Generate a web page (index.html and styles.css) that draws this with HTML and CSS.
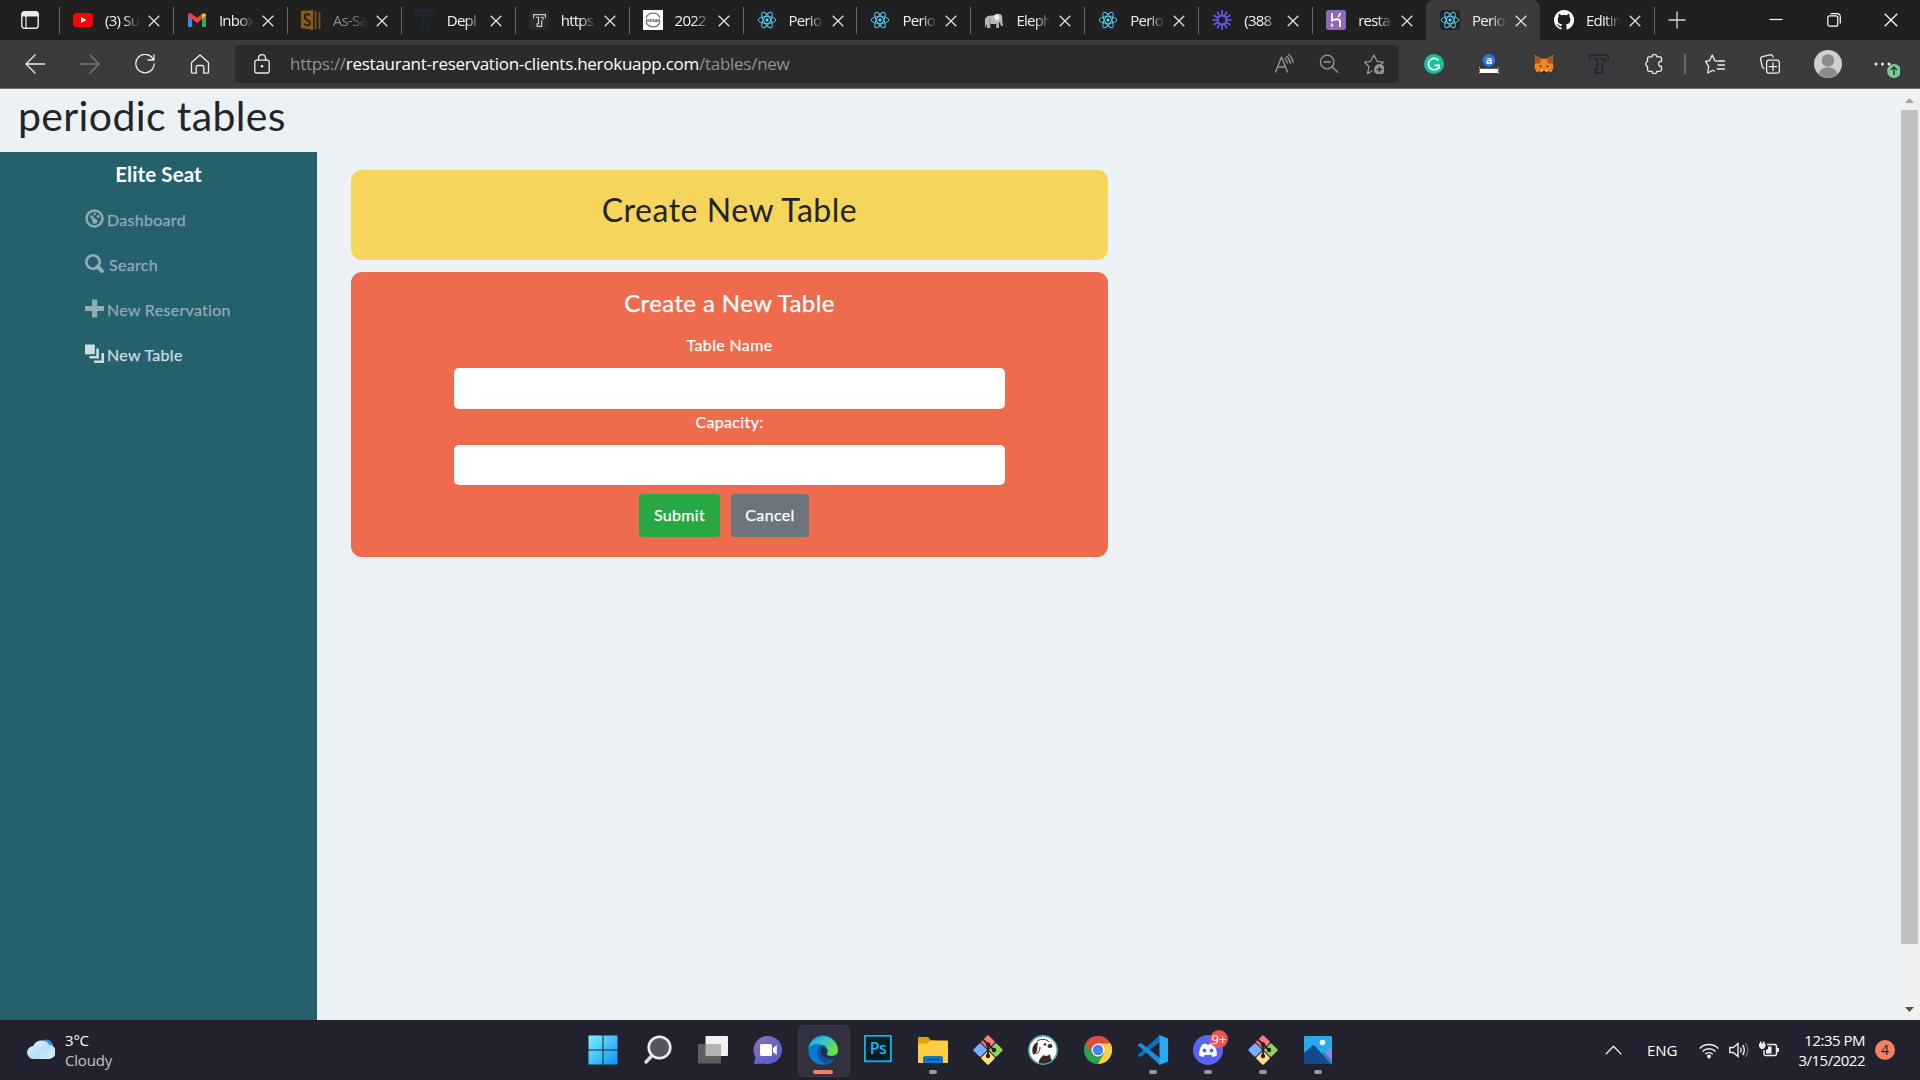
FILE: index.html
```html
<!DOCTYPE html>
<html lang="en">
<head>
<meta charset="utf-8">
<title>Periodic Tables</title>
<link rel="stylesheet" href="styles.css">
</head>
<body>
<svg class="defs" aria-hidden="true">
  <symbol id="react" viewBox="0 0 20 20">
    <rect width="20" height="20" rx="2" fill="#20232a"/>
    <g fill="none" stroke="#5ccfee" stroke-width=".95">
      <ellipse cx="10" cy="10" rx="8.8" ry="3.4"/>
      <ellipse cx="10" cy="10" rx="8.8" ry="3.4" transform="rotate(60 10 10)"/>
      <ellipse cx="10" cy="10" rx="8.8" ry="3.4" transform="rotate(120 10 10)"/>
    </g>
    <circle cx="10" cy="10" r="1.6" fill="#61dafb"/>
  </symbol>
  <symbol id="tee" viewBox="0 0 20 20">
    <path d="M.8 6.5V1h18.4v5.5M4.5 5h4v10H6.300v4h7v-9.500M11.500 5h4v4" fill="none" stroke="currentColor" stroke-width="1.8"/>
  </symbol>
  <symbol id="close" viewBox="0 0 12 12">
    <path d="M.7.7l10.600 10.600M11.300.7L.7 11.300" fill="none" stroke="#e2e2e2" stroke-width="1.3"/>
  </symbol>
  <symbol id="git" viewBox="0 0 30 30">
    <g transform="rotate(45 15 15)">
      <rect x="4.300" y="4.300" width="10.200" height="10.200" rx="1" fill="#ff7b7b"/>
      <rect x="15.500" y="4.300" width="10.200" height="10.200" rx="1" fill="#8cd35f"/>
      <rect x="15.500" y="15.500" width="10.200" height="10.200" rx="1" fill="#ffe07a"/>
      <rect x="4.300" y="15.500" width="10.200" height="10.200" rx="1" fill="#7aadff"/>
    </g>
    <path d="M10 4.500l5 5V21M15 9.500l6 5.500" fill="none" stroke="#2b1d22" stroke-width="1.8"/>
    <circle cx="15" cy="9.500" r="2.200" fill="#2b1d22"/><circle cx="15" cy="21" r="2.200" fill="#2b1d22"/><circle cx="21" cy="15" r="2.200" fill="#2b1d22"/>
  </symbol>
</svg>

<div class="tabstrip">
  <div class="tab-actions">
    <svg width="18" height="18" viewBox="0 0 18 18"><rect x=".8" y=".8" width="16.400" height="16.400" rx="2.500" fill="none" stroke="#ececec" stroke-width="1.400"/><path d="M1 3a2 2 0 0 1 2-2h12a2 2 0 0 1 2 2v2.500H1z" fill="#ececec"/><path d="M5 5v12" stroke="#ececec" stroke-width="1.200"/></svg>
  </div>
  <div class="tab"><svg class="fav" viewBox="0 0 20 20"><rect y="3" width="20" height="14" rx="3.500" fill="#f00"/><path d="M8 7l5.500 3L8 13z" fill="#fff"/></svg><span class="name">(3) Su</span><svg class="x"><use href="#close"/></svg></div>
  <div class="tab"><svg class="fav" viewBox="0 0 20 20"><path d="M1 5v12h4V9z" fill="#4285f4"/><path d="M19 5v12h-4V9z" fill="#34a853"/><path d="M1 5c0-2 2-2.500 3.300-1.600L10 7.800l5.700-4.400L15 9l-5 4-5-4-4-3z" fill="#ea4335"/><path d="M15 9V4c1.500-1.500 4-.8 4 1.200V6z" fill="#fbbc04"/></svg><span class="name">Inbox</span><svg class="x"><use href="#close"/></svg></div>
  <div class="tab asleep"><svg class="fav" viewBox="0 0 20 20"><path d="M0 1l12-1v20L0 18z" fill="#8a5a16"/><path d="M9 5C5 3 3 5 4 8s5 2 5 5-3 3-6 1" fill="none" stroke="#262016" stroke-width="2"/><path d="M14.500 1v18M18.500 2v17" stroke="#7a5016" stroke-width="1.800"/></svg><span class="name">As-Sa</span><svg class="x"><use href="#close"/></svg></div>
  <div class="tab"><svg class="fav navy" viewBox="0 0 20 20"><use href="#tee"/></svg><span class="name">Depl</span><svg class="x"><use href="#close"/></svg></div>
  <div class="tab"><svg class="fav pale" viewBox="0 0 20 20"><rect width="20" height="20" rx="3" fill="#2a2a2a"/><use href="#tee" x="4" y="4" width="13" height="13"/></svg><span class="name">https</span><svg class="x"><use href="#close"/></svg></div>
  <div class="tab"><svg class="fav" viewBox="0 0 20 20"><path fill="#fff" d="M0 0h20v20H0z"/><path d="M3 8a7.500 7.500 0 0 1 14 0M3 12a7.500 7.500 0 0 0 14 0" fill="none" stroke="#777" stroke-width="1.300"/><text x="10" y="11.600" text-anchor="middle" class="nissan">NISSAN</text></svg><span class="name">2022</span><svg class="x"><use href="#close"/></svg></div>
  <div class="tab"><svg class="fav"><use href="#react"/></svg><span class="name">Perio</span><svg class="x"><use href="#close"/></svg></div>
  <div class="tab"><svg class="fav"><use href="#react"/></svg><span class="name">Perio</span><svg class="x"><use href="#close"/></svg></div>
  <div class="tab"><svg class="fav" viewBox="0 0 20 20"><path d="M1 18V9c1-3 5-4 9-3.500C12 3 17 3 18 6l.5 7c.5 2 1 3-.5 3-1.800 0-1.500-3-2-4l-1 1v5h-3v-4H6v4H3v-4z" fill="#b9b9b9"/><path d="M10 6c2-2 4-2 5 0s0 4-1.500 4.500S10 9 10 6z" fill="#eee"/><path d="M6 8v10M13 13v5" stroke="#8a8a8a"/></svg><span class="name">Eleph</span><svg class="x"><use href="#close"/></svg></div>
  <div class="tab"><svg class="fav"><use href="#react"/></svg><span class="name">Perio</span><svg class="x"><use href="#close"/></svg></div>
  <div class="tab"><svg class="fav" viewBox="0 0 20 20"><g stroke="#625df5" stroke-width="1.700" stroke-linecap="round"><path id="ray" d="M10 .9v5M10 14.100v5"/><use href="#ray" transform="rotate(30 10 10)"/><use href="#ray" transform="rotate(60 10 10)"/><use href="#ray" transform="rotate(90 10 10)"/><use href="#ray" transform="rotate(120 10 10)"/><use href="#ray" transform="rotate(150 10 10)"/></g><circle cx="10" cy="10" r="4.500" fill="none" stroke="#625df5" stroke-width="1.500"/></svg><span class="name">(388</span><svg class="x"><use href="#close"/></svg></div>
  <div class="tab"><svg class="fav" viewBox="0 0 20 20"><rect width="20" height="20" rx="2.500" fill="#9068b8"/><path d="M6 3v7.500c3-1.500 8-2.200 8 .8V17M14 3c0 1.500-.8 2.800-1.800 4" fill="none" stroke="#fff" stroke-width="1.900"/><path d="M5.200 13l2.600 2.200-2.600 2.200z" fill="#fff"/></svg><span class="name">resta</span><svg class="x"><use href="#close"/></svg></div>
  <div class="tab active"><svg class="fav"><use href="#react"/></svg><span class="name">Perio</span><svg class="x"><use href="#close"/></svg></div>
  <div class="tab"><svg class="fav" viewBox="0 0 16 16"><path fill="#fff" d="M8 0a8 8 0 0 0-2.530 15.590c.4.070.55-.17.55-.38v-1.490c-2.010.37-2.530-.49-2.690-.94-.09-.23-.48-.94-.82-1.130-.28-.15-.68-.52-.01-.53.63-.01 1.080.58 1.230.82.72 1.210 1.870.87 2.330.66.070-.52.28-.87.51-1.070-1.780-.2-3.640-.89-3.640-3.950 0-.87.31-1.590.82-2.150-.08-.2-.36-1.020.08-2.120 0 0 .67-.21 2.200.82a7.600 7.600 0 0 1 4 0c1.530-1.040 2.200-.82 2.200-.82.44 1.100.16 1.920.08 2.120.51.56.82 1.270.82 2.150 0 3.070-1.870 3.750-3.650 3.950.29.25.54.73.54 1.480v2.200c0 .21.150.46.55.38A8 8 0 0 0 8 0z"/></svg><span class="name">Editin</span><svg class="x"><use href="#close"/></svg></div>
  <div class="newtab"><svg width="18" height="18" viewBox="0 0 18 18"><path d="M9 .5v17M.5 9h17" stroke="#d9d9d9" stroke-width="1.300"/></svg></div>
  <div class="window-buttons">
    <svg width="14" height="14" viewBox="0 0 14 14"><path d="M.5 6.500h13" stroke="#fff" stroke-width="1.200"/></svg>
    <svg width="14" height="14" viewBox="0 0 14 14"><rect x=".8" y="2.800" width="10" height="10.400" rx="2" fill="none" stroke="#fff" stroke-width="1.200"/><path d="M3.500.7H10A3.300 3.300 0 0 1 13.300 4v6.500" fill="none" stroke="#fff" stroke-width="1.200"/></svg>
    <svg width="14" height="14" viewBox="0 0 14 14"><path d="M.7.7l12.600 12.600M13.300.7L.7 13.300" stroke="#fff" stroke-width="1.300"/></svg>
  </div>
</div>

<div class="toolbar">
  <span class="slot"><svg viewBox="0 0 20 20"><path d="M19.500 10H1M10 1L1 10l9 9" class="ln"/></svg></span>
  <span class="slot faded"><svg viewBox="0 0 20 20"><path d="M.5 10H19M10 1l9 9-9 9" class="ln"/></svg></span>
  <span class="slot"><svg viewBox="0 0 20 20"><path d="M18.500 6A9.200 9.200 0 1 0 19.200 10M19 .8V6h-6" class="ln"/></svg></span>
  <span class="slot"><svg viewBox="0 0 20 20"><path d="M1.500 8.600L10 1l8.500 7.600V18a1.200 1.200 0 0 1-1.200 1.200h-3.500V13a1.500 1.500 0 0 0-1.500-1.500H7.700A1.500 1.500 0 0 0 6.200 13v6.200H2.700A1.200 1.200 0 0 1 1.500 18z" class="ln"/></svg></span>
  <div class="address">
    <svg class="lock" viewBox="0 0 20 20"><rect x="2.800" y="6.200" width="14.400" height="12.800" rx="2" class="ln"/><path d="M6.500 6V4a3.500 3.500 0 0 1 7 0v2" class="ln"/><circle cx="10" cy="12.300" r="1.300" fill="#eee"/></svg>
    <span class="url">https://<b>restaurant-reservation-clients.herokuapp.com</b>/tables/new</span>
    <svg viewBox="0 0 20 20"><path d="M1.500 18L7.500 3l6 15M3.500 13h8M11 4.500q2 1.700 2.200 4.500M12.500 2.300q3.300 2.500 3.700 6.700M14.500.6q4 3 4.500 8" class="ln"/></svg>
    <svg viewBox="0 0 20 20"><circle cx="8.200" cy="8" r="6.800" class="ln"/><path d="M13.200 13l5.500 5.300M5 8h6.400" class="ln"/></svg>
    <svg viewBox="0 0 20 20"><path d="M8 17l-4.500 2.600L5 12.700.6 8.200l6-.9L10 1l3 6.300 6.200.9-2 2" class="ln"/><circle cx="15.400" cy="15.500" r="5.400" fill="#989898"/><path d="M15.400 12.700v5.600M12.600 15.500h5.600" stroke="#2b2b2b" stroke-width="1.400"/></svg>
  </div>
  <span class="slot"><svg viewBox="0 0 20 20"><circle cx="10" cy="10" r="10" fill="#15c39a"/><path d="M14.600 6.500A5.700 5.700 0 1 0 15 13M10.500 11.300H15v3.500" fill="none" stroke="#fff" stroke-width="1.700"/></svg></span>
  <span class="slot"><svg viewBox="0 0 20 20"><path d="M10 13.500L5.500 10.500a6.200 6.200 0 1 1 9 0z" fill="#2479e6"/><text x="10" y="9.800" text-anchor="middle" class="amz">a</text><path d="M.5 13v7M19.500 13v7" stroke="#aaa" stroke-dasharray="1.500 1"/><path d="M1 14.800h18V19H1z" fill="#fff"/></svg></span>
  <span class="slot"><svg viewBox="0 0 20 20"><path d="M.6 1l7 3.800h4.800l7-3.800-.8 8 1 4-2 5-4.300-.8-1.800 1.800h-3l-1.800-1.800-4.300.8-2-5 1-4z" fill="#f5841f"/><path d="M.6 1l7 3.800-2 5-4-.5zM19.400 1l-7 3.800 2 5 4-.5z" fill="#a9541c"/><path d="M8 17h4v2H8z" fill="#1d1d1d"/><path d="M5 11.500l3 .5-1.500 1.500zM15 11.500l-3 .5 1.500 1.500z" fill="#233447"/><path d="M7 15l1 3M13 15l-1 3" stroke="#f7d9bd"/></svg></span>
  <span class="slot navy"><svg viewBox="0 0 20 20"><use href="#tee"/></svg></span>
  <span class="slot"><svg viewBox="0 0 20 20"><path d="M5 2.800h3a2.400 2.400 0 0 1 4.800 0H16a1.500 1.500 0 0 1 1.500 1.500v3.200c-4-.8-4 5.400 0 4.800v3.500a1.500 1.500 0 0 1-1.500 1.500h-3.200a2.400 2.400 0 0 1-4.800 0H5a1.500 1.500 0 0 1-1.500-1.500v-3.500a2.500 2.500 0 0 1 0-4.800V4.300A1.500 1.500 0 0 1 5 2.800z" class="ln"/></svg></span>
  <span class="divider"></span>
  <span class="slot"><svg viewBox="0 0 20 20"><path d="M12 7l-2.200-.3L7.200 1 4.600 6.700.6 7.500l3 4.800-.8 6.700 5-2.800 1.600 1M13 7h6.500M13 11h6.500M12 15h7.500" class="ln"/></svg></span>
  <span class="slot"><svg viewBox="0 0 20 20"><rect x="6.600" y="6.200" width="12.800" height="13" rx="2.500" class="ln"/><path d="M13 9v7.500M9.200 12.700h7.500M4 14.500a3 3 0 0 1-1.800-2L.7 5.500A2.500 2.500 0 0 1 2.500 2.600L10 .8A2.500 2.500 0 0 1 13 3" class="ln"/></svg></span>
  <span class="slot wide"><svg class="avatar" viewBox="0 0 28 28"><circle cx="14" cy="14" r="14" fill="#d2d0ce"/><circle cx="14" cy="10.500" r="6.200" fill="#8d8a87"/><path d="M4.500 24a9.600 8 0 0 1 19 0A14 14 0 0 1 4.500 24z" fill="#8d8a87"/></svg></span>
  <span class="slot"><svg class="more" viewBox="0 0 28 28"><g fill="#eee"><circle cx="4" cy="14" r="1.500"/><circle cx="10.500" cy="14" r="1.500"/><circle cx="17" cy="14" r="1.500"/></g><circle cx="22" cy="21" r="7" fill="#7cc893"/><path d="M22 25v-8M19 20l3-3 3 3" fill="none" stroke="#1e3a28" stroke-width="1.400"/></svg></span>
</div>

<div class="viewport">
  <div class="page">
    <h1 class="site-title">periodic tables</h1>
    <div class="columns">
      <nav class="sidebar">
        <div class="brand">Elite Seat</div>
        <ul class="menu">
          <li><svg viewBox="0 0 19 19"><circle cx="9.500" cy="9.500" r="8" fill="none" stroke="currentColor" stroke-width="2.500"/><circle cx="9.800" cy="12.300" r="2.500" fill="currentColor"/><path d="M9.800 12L5.800 6.800" stroke="currentColor" stroke-width="2.600"/><circle cx="9.600" cy="5.100" r="1.300" fill="currentColor"/><circle cx="13.200" cy="7.400" r="1.400" fill="currentColor"/></svg>Dashboard</li>
          <li><svg viewBox="0 0 19 19"><circle cx="8" cy="8" r="6.700" fill="none" stroke="currentColor" stroke-width="2.600"/><path d="M12.500 12.500l4.500 4.500" stroke="currentColor" stroke-width="4" stroke-linecap="round"/></svg><span class="search">Search</span></li>
          <li><svg viewBox="0 0 19 19"><path d="M7 .5h5.200V7H19v5h-6.800v6.500H7V12H0V7h7z" fill="currentColor"/></svg>New Reservation</li>
          <li class="current"><svg viewBox="0 0 19 19"><path d="M0 .5h9.800v9.800H0z" fill="currentColor"/><path d="M12.600 4.500v8.700H4.500M17.700 9v8.700H9" fill="none" stroke="currentColor" stroke-width="2.600"/></svg>New Table</li>
        </ul>
      </nav>
      <main class="content">
        <section class="banner"><h2>Create New Table</h2></section>
        <form class="card">
          <h4>Create a New Table</h4>
          <label for="name">Table Name</label>
          <input id="name" type="text">
          <label for="capacity">Capacity:</label>
          <input id="capacity" type="text">
          <div class="buttons"><button type="button" class="btn submit">Submit</button><button type="button" class="btn cancel">Cancel</button></div>
        </form>
      </main>
    </div>
  </div>
  <div class="scrollbar">
    <svg width="17" height="21" viewBox="0 0 17 21"><path d="M4 14l4.500-5 4.500 5z" fill="#a3a3a3"/></svg>
    <div class="thumb"></div>
    <svg class="down" width="17" height="21" viewBox="0 0 17 21"><path d="M4 8l4.500 5L13 8z" fill="#505050"/></svg>
  </div>
</div>

<footer class="taskbar">
  <div class="weather">
    <svg width="28" height="22" viewBox="0 0 28 22"><defs><linearGradient id="cl" x1="0" y1="0" x2="1" y2="1"><stop offset="0" stop-color="#e4f6ff"/><stop offset=".55" stop-color="#b5e0fb"/><stop offset="1" stop-color="#e1eefc"/></linearGradient></defs><circle cx="19.500" cy="8" r="6.500" fill="#3c8cd8"/><path d="M7 21a6.500 6.500 0 0 1-.8-13A9 9 0 0 1 22 6.500a7.200 7.200 0 0 1-1 14.500z" fill="url(#cl)"/></svg>
    <div class="lines"><div>3°C</div><div class="dim">Cloudy</div></div>
  </div>
  <div class="apps">
    <span class="app"><svg viewBox="0 0 30 30"><defs><linearGradient id="win" gradientUnits="userSpaceOnUse" x1="0" y1="0" x2="30" y2="30"><stop offset="0" stop-color="#82f0ff"/><stop offset="1" stop-color="#0794f8"/></linearGradient></defs><path d="M.5.5h14v14H.5zM15.500.5h14v14h-14zM.5 15.500h14v14H.5zM15.500 15.500h14v14h-14z" fill="url(#win)"/></svg></span>
    <span class="app"><svg viewBox="0 0 30 30"><path d="M9.500 20L3 27" stroke="#dedede" stroke-width="3.400" stroke-linecap="round"/><circle cx="16.500" cy="12.500" r="10.800" fill="#555560" stroke="#ededed" stroke-width="2.600"/></svg></span>
    <span class="app"><svg viewBox="0 0 30 30"><rect x="7.500" y="1" width="22.500" height="20" rx="1" fill="#f1f1f1"/><rect x="0" y="9" width="23" height="19.500" rx="1" fill="#5e5e5e"/><path d="M7.500 9H23v12H7.500z" fill="#b3b3b3"/></svg></span>
    <span class="app"><svg viewBox="0 0 30 30"><defs><linearGradient id="chat" x1="0" y1="0" x2="1" y2="1"><stop offset="0" stop-color="#a068b5"/><stop offset=".5" stop-color="#6667c8"/><stop offset="1" stop-color="#5058c8"/></linearGradient></defs><path d="M15 1a14 14 0 1 1-4 27.400L1 29l1.500-7A14 14 0 0 1 15 1z" fill="url(#chat)"/><rect x="7" y="9" width="12" height="12" rx="1.500" fill="#fff"/><path d="M20 13l3.800-3v10L20 17z" fill="#fff"/></svg></span>
    <span class="app focused"><svg viewBox="0 0 30 30"><defs><linearGradient id="eg" x1="0" y1="0" x2="1" y2=".5"><stop offset="0" stop-color="#2ba8ea"/><stop offset=".55" stop-color="#38c5c5"/><stop offset="1" stop-color="#6fe03c"/></linearGradient></defs><circle cx="15" cy="15" r="14.800" fill="#0a78cc"/><path d="M.4 13A15 15 0 0 1 30 15c0 4-3 6-6.500 6-3 0-5-1-4.500-2.500C21 16 19 12 15 10 10 8 3 9 .4 13z" fill="url(#eg)"/><path d="M9.500 17c0-4.500 3-7 6-6.800C19 12 21 16 19 18.500c-1 2 3 3.500 9 1.500-2.500 6-7 9-11 8.500-4.500-.5-7.500-6-7.500-11.500z" fill="#1152a0"/><path d="M14 12.500c2.500-.8 5 2.500 4.500 5.500-.8 2.800 3.500 5 9.500 2.500l-1.500 2.700c-7 2.300-13.500-2.200-13.500-7 0-1.800.2-3.200 1-3.700z" fill="#2b2b39"/><path d="M28.500 20.500q2 .3 0 3l-3 2 1-3.500z" fill="#32323e"/></svg><i class="run wide-run"></i></span>
    <span class="app"><svg viewBox="0 0 30 30"><rect x="1.900" y=".8" width="26" height="25.500" fill="#001d26" stroke="#11b5e4" stroke-width="1.800"/><text x="15" y="19" text-anchor="middle" class="ps">Ps</text></svg></span>
    <span class="app"><svg viewBox="0 0 30 30"><path d="M0 3a1 1 0 0 1 1-1h9l3 3.500h5V14H0z" fill="#e3a008"/><path d="M0 8.500h9.500l3-3H29a1 1 0 0 1 1 1V27a1 1 0 0 1-1 1H1a1 1 0 0 1-1-1z" fill="#ffcf3f"/><path d="M5 28v-5a2 2 0 0 1 2-2h16a2 2 0 0 1 2 2v5z" fill="#1377c4"/><path d="M8.500 24.500h13" stroke="#0a4e92" stroke-width="1.500"/></svg><i class="run"></i></span>
    <span class="app"><svg><use href="#git"/></svg></span>
    <span class="app"><svg viewBox="0 0 30 30"><circle cx="15" cy="15" r="14.200" fill="#fff" stroke="#4ba7ad" stroke-width="1.600"/><path d="M11 28c-.5-4 3-6 4.500-8 1.500 1.500 5 1 6.500-1 .5 3 1 5.500 2 6.500-3 2.800-8.500 4-13 2.500zM5 19c-2-6 1-11 5-12-1 4 0 8-2 11-1 1.500-2 2-3 1z" fill="#382923"/><path d="M9 6c5-3 10-1.500 12 1M12 12c0 4-2 6-4 7" fill="none" stroke="#382923"/><circle cx="17" cy="9.500" r="1.300" fill="#382923"/><ellipse cx="22" cy="11" rx="2.500" ry="2" fill="#382923"/></svg></span>
    <span class="app"><svg viewBox="0 0 30 30"><circle cx="15" cy="15" r="14" fill="#2ba24c"/><path d="M2.900 8A14 14 0 0 1 27.500 8.500H15L9 18z" fill="#e04a3f"/><path d="M15 8.500h12.500A14 14 0 0 1 15 29l6-10.500z" fill="#ffce44"/><circle cx="15" cy="15" r="6.500" fill="#fff"/><circle cx="15" cy="15" r="5.200" fill="#4285f4"/></svg></span>
    <span class="app"><svg viewBox="0 0 30 30"><path d="M22 7L3 22 .8 21a1 1 0 0 1 0-2L22 0z" fill="#0c73b8"/><path d="M22 23L3 8 .8 9a1 1 0 0 0 0 2L22 30z" fill="#168fd8"/><path d="M21.500 0L30 3.500v23L21.500 30z" fill="#2aa8f2"/></svg><i class="run"></i></span>
    <span class="app"><svg viewBox="0 0 30 30"><circle cx="15" cy="15" r="15" fill="#5865f2"/><path d="M9.500 9.200l3-1 .8 1.300h3.400l.8-1.300 3 1c2.500 3.800 3.700 7.300 3.400 11-1.400 1-2.800 1.600-4.400 1.900l-1.100-2h-6.800l-1.100 2c-1.600-.3-3-.9-4.400-1.900-.3-3.700.9-7.200 3.400-11z" fill="#fff"/><circle cx="11.500" cy="15.500" r="1.900" fill="#5865f2"/><circle cx="18.500" cy="15.500" r="1.900" fill="#5865f2"/></svg><em class="count">9+</em><i class="run"></i></span>
    <span class="app"><svg><use href="#git"/></svg><i class="run"></i></span>
    <span class="app"><svg viewBox="0 0 30 30"><rect x="1" y="1" width="28" height="28" rx="1" fill="#27aaea"/><path d="M29 12v17H14l8-11z" fill="#8a8fdc"/><path d="M18 20l3-3.500 8 9V29H18z" fill="#3c7fcb"/><path d="M1 18l8-7a2 2 0 0 1 2.800 0L28 29H1z" fill="#14498e"/><circle cx="19.500" cy="7.500" r="2.800" fill="#fff"/></svg><i class="run"></i></span>
  </div>
  <div class="tray">
    <svg class="chev" width="17" height="10" viewBox="0 0 17 10"><path d="M.8 9.200L8.500 1.300l7.700 7.900" fill="none" stroke="#eee" stroke-width="1.300"/></svg>
    <span class="lang">ENG</span>
    <svg width="20" height="20" viewBox="0 0 20 20"><path d="M.7 8.500a13 13 0 0 1 18.600 0M3.500 11.500a9.200 9.200 0 0 1 13 0M6.300 14.300a5.400 5.400 0 0 1 7.400 0" fill="none" stroke="#eee" stroke-width="1.500"/><circle cx="10" cy="16.500" r="2" fill="#eee"/></svg>
    <svg width="20" height="20" viewBox="0 0 20 20"><path d="M.8 7.500h3.500l4.700-4v13l-4.700-4H.8z" fill="none" stroke="#eee" stroke-width="1.400"/><path d="M11.500 7.500q1.500 2.500 0 5M13.700 5q3.200 5 0 10" fill="none" stroke="#eee" stroke-width="1.400"/><path d="M16.500 2.800q4.500 7.200 0 14.400" fill="none" stroke="#6d6d74" stroke-width="1.300"/></svg>
    <svg width="20" height="20" viewBox="0 0 20 20"><path d="M8 4.500h7.500a2 2 0 0 1 2 2v7a2 2 0 0 1-2 2h-9a1.500 1.500 0 0 1-1.500-1.500V10" fill="none" stroke="#eee" stroke-width="1.400"/><path d="M18 8h2v4h-2zM9 6.500h3.500v7H7V10l2-1zM0 3.500h6.500v3L4.500 9H2L0 6.500zM1 1.500h1.500v2H1zM4 1.500h1.500v2H4z" fill="#eee"/></svg>
    <div class="lines clock"><div>12:35 PM</div><div>3/15/2022</div></div>
    <span class="alerts">4</span>
  </div>
</footer>
</body>
</html>
```

FILE: styles.css
```css
* { box-sizing: border-box; }
body {
  margin: 0;
  width: 1920px;
  height: 1080px;
  overflow: hidden;
  display: flex;
  flex-direction: column;
  font-family: "Open Sans", "Noto Sans", sans-serif;
}
svg { display: block; flex: none; }
.defs { width: 0; height: 0; position: absolute; }

/* Browser tabs */
.tabstrip { height: 40px; flex: none; display: flex; background: #202020; color: #f2f2f2; }
.tab-actions { width: 59px; padding: 11px 0 0 21px; }
.tab {
  width: 113.930px;
  flex: none;
  display: flex;
  align-items: center;
  padding-left: 13px;
  border-left: 1px solid transparent;
  border-image: linear-gradient(transparent 8px, #6b6b6b 8px, #6b6b6b 33px, transparent 33px) 1;
}
.fav { width: 20px; height: 20px; }
.name {
  width: 34px;
  margin: 0 9px 0 12px;
  white-space: nowrap;
  font-size: 15px;
  letter-spacing: -.75px;
  mask-image: linear-gradient(90deg, #000 55%, transparent 103%);
}
.x { width: 12px; height: 12px; margin-top: 1px; }
.asleep .name { color: #8b8b8b; }
.active { background: #3b3b3b; border-image: none; border-radius: 8px 8px 0 0; }
.active + .tab { border-image: none; }
.navy { color: #1d2a3a; }
.pale { color: #d0d0d0; }
.nissan { font: bold 3.800px "Liberation Sans", sans-serif; fill: #444; }
.newtab { width: 130px; padding: 11px 0 0 13px; border-left: 1px solid; border-image: linear-gradient(transparent 8px, #6b6b6b 8px, #6b6b6b 33px, transparent 33px) 1; }
.window-buttons { display: flex; gap: 43.500px; padding: 13px 0 0; margin-left: -14.500px; }

/* Address row */
.toolbar {
  height: 49px;
  flex: none;
  display: flex;
  align-items: center;
  padding-left: 7.500px;
  background: #3b3b3b;
  border-bottom: 1px solid #6e6c6c;
  color: #eee;
}
.slot { width: 55px; flex: none; display: flex; justify-content: center; }
.slot svg { width: 20px; height: 20px; }
.slot.wide { width: 61px; }
.slot .avatar, .slot .more { width: 28px; height: 28px; }
.slot.faded { color: #7b7b7b; }
.slot.navy { color: #1d2a3a; }
.amz { font: 700 11px "Open Sans", sans-serif; fill: #fff; }
.ln { fill: none; stroke: currentColor; stroke-width: 1.300; stroke-linecap: round; stroke-linejoin: round; }
.address {
  width: 1164px;
  height: 38px;
  margin: 0 7.500px;
  padding: 0 15px 0 17px;
  display: flex;
  align-items: center;
  gap: 25px;
  border-radius: 5px;
  background: #2b2b2b;
  color: #989898;
}
.address svg { width: 20px; height: 20px; }
.address .lock { color: #eee; margin-right: -7px; }
.url { flex: 1; margin-top: -2px; font-size: 17px; letter-spacing: -.27px; white-space: nowrap; color: #929292; }
.url b { font-weight: 400; color: #fff; }
.divider { width: 2px; height: 20px; margin: 0 2px; background: #666; }

/* Web page */
.viewport { height: 931px; flex: none; display: flex; background: #ecf1f5; }
.page { width: 1901px; display: flex; flex-direction: column; font-family: Lato, sans-serif; color: #212529; }
.site-title { height: 63px; margin: 0; padding-left: 18px; font-size: 41px; font-weight: 400; line-height: 54px; letter-spacing: .35px; }
.columns { flex: 1; display: flex; }
.sidebar { width: 317px; background: #25616d; }
.brand { height: 45.300px; line-height: 44px; font-size: 20.500px; font-weight: 700; text-align: center; color: #fff; letter-spacing: .1px; }
.menu { margin: 0; padding: 0 0 0 85px; list-style: none; color: #90adb4; font-size: 16px; letter-spacing: .3px; -webkit-text-stroke: .25px currentColor; }
.menu li { height: 45px; display: flex; align-items: center; gap: 3px; }
.menu svg { width: 19px; height: 19px; margin-top: -3px; }
.search { padding-left: 2px; }
.menu .current { color: #cddde0; }
.content { width: 757px; margin-left: 34px; padding-top: 18px; text-align: center; }
.banner { height: 90px; padding-top: 21px; border-radius: 11px; background: #f5d55c; }
.banner h2 { margin: 0; font-size: 32px; line-height: 38px; font-weight: 400; letter-spacing: .52px; }
.card {
  height: 285px;
  margin-top: 12px;
  padding-top: 16px;
  display: flex;
  flex-direction: column;
  align-items: center;
  border-radius: 11px;
  background: #ef6b4d;
  color: #fff;
  -webkit-text-stroke: .25px currentColor;
}
.card h4 { margin: 0 0 16px; font-size: 24px; line-height: 29px; font-weight: 400; letter-spacing: .4px; }
.card label { font-size: 16px; line-height: 24px; margin-bottom: 11px; letter-spacing: .35px; }
.card input { width: 551px; height: 41px; margin: 0 0 1px; border: 0; border-radius: 5px; background: #fff; }
.card input:last-of-type { height: 40px; margin-bottom: 9px; }
.buttons { display: flex; gap: 11px; margin-right: 11px; }
.btn { height: 43px; padding: 0 0 2px; border: 0; border-radius: 4px; color: #fff; font: 400 16px Lato, sans-serif; letter-spacing: .35px; }
.submit { width: 81px; background: #28a745; }
.cancel { width: 78px; background: #6c757d; }
.scrollbar { width: 19px; display: flex; flex-direction: column; background: #f0f0f0; }
.thumb { width: 17px; height: 834px; background: #c1c1c1; }
.down { margin-top: auto; }

/* Desktop taskbar */
.taskbar { height: 60px; flex: none; display: flex; background: #22222e; color: #fff; font-size: 15px; }
.weather { width: 575px; display: flex; align-items: center; gap: 10px; padding-left: 27px; }
.weather svg { margin-top: -2px; }
.lines { margin-top: -1px; line-height: 20px; letter-spacing: -.2px; }
.dim { color: #c4c4c8; }
.apps { display: flex; }
.app { position: relative; width: 55px; display: flex; align-items: center; justify-content: center; }
.app svg { width: 30px; height: 30px; }
.focused::before { content: ""; position: absolute; left: 3px; top: 5px; width: 50px; height: 50px; border: 1px solid #3b3b47; border-radius: 5px; background: #32323e; }
.focused svg { position: relative; }
.run { position: absolute; left: 24px; top: 50px; width: 8px; height: 4px; border-radius: 2px; background: #9a9a9f; }
.run.wide-run { left: 18px; width: 20px; background: #f67e63; }
.count { position: absolute; left: 30px; top: 10px; width: 18px; height: 18px; border-radius: 50%; background: #ee5253; font: 500 13px/18px "Open Sans", sans-serif; text-align: center; }
.ps { font: 600 16px "Open Sans", sans-serif; letter-spacing: -.5px; fill: #14b7e8; }
.tray { margin-left: auto; padding-right: 25px; display: flex; align-items: center; gap: 10px; }
.chev { margin-right: 15px; }
.lang { width: 32px; margin-right: 10px; letter-spacing: -.1px; }
.clock { width: 76px; margin-right: -1px; padding-left: 0; text-align: right; letter-spacing: -.5px; }
.alerts { width: 20px; height: 20px; margin-left: 1px; border-radius: 50%; background: #f67e63; color: #20202a; font-size: 14px; line-height: 20px; text-align: center; }
```
